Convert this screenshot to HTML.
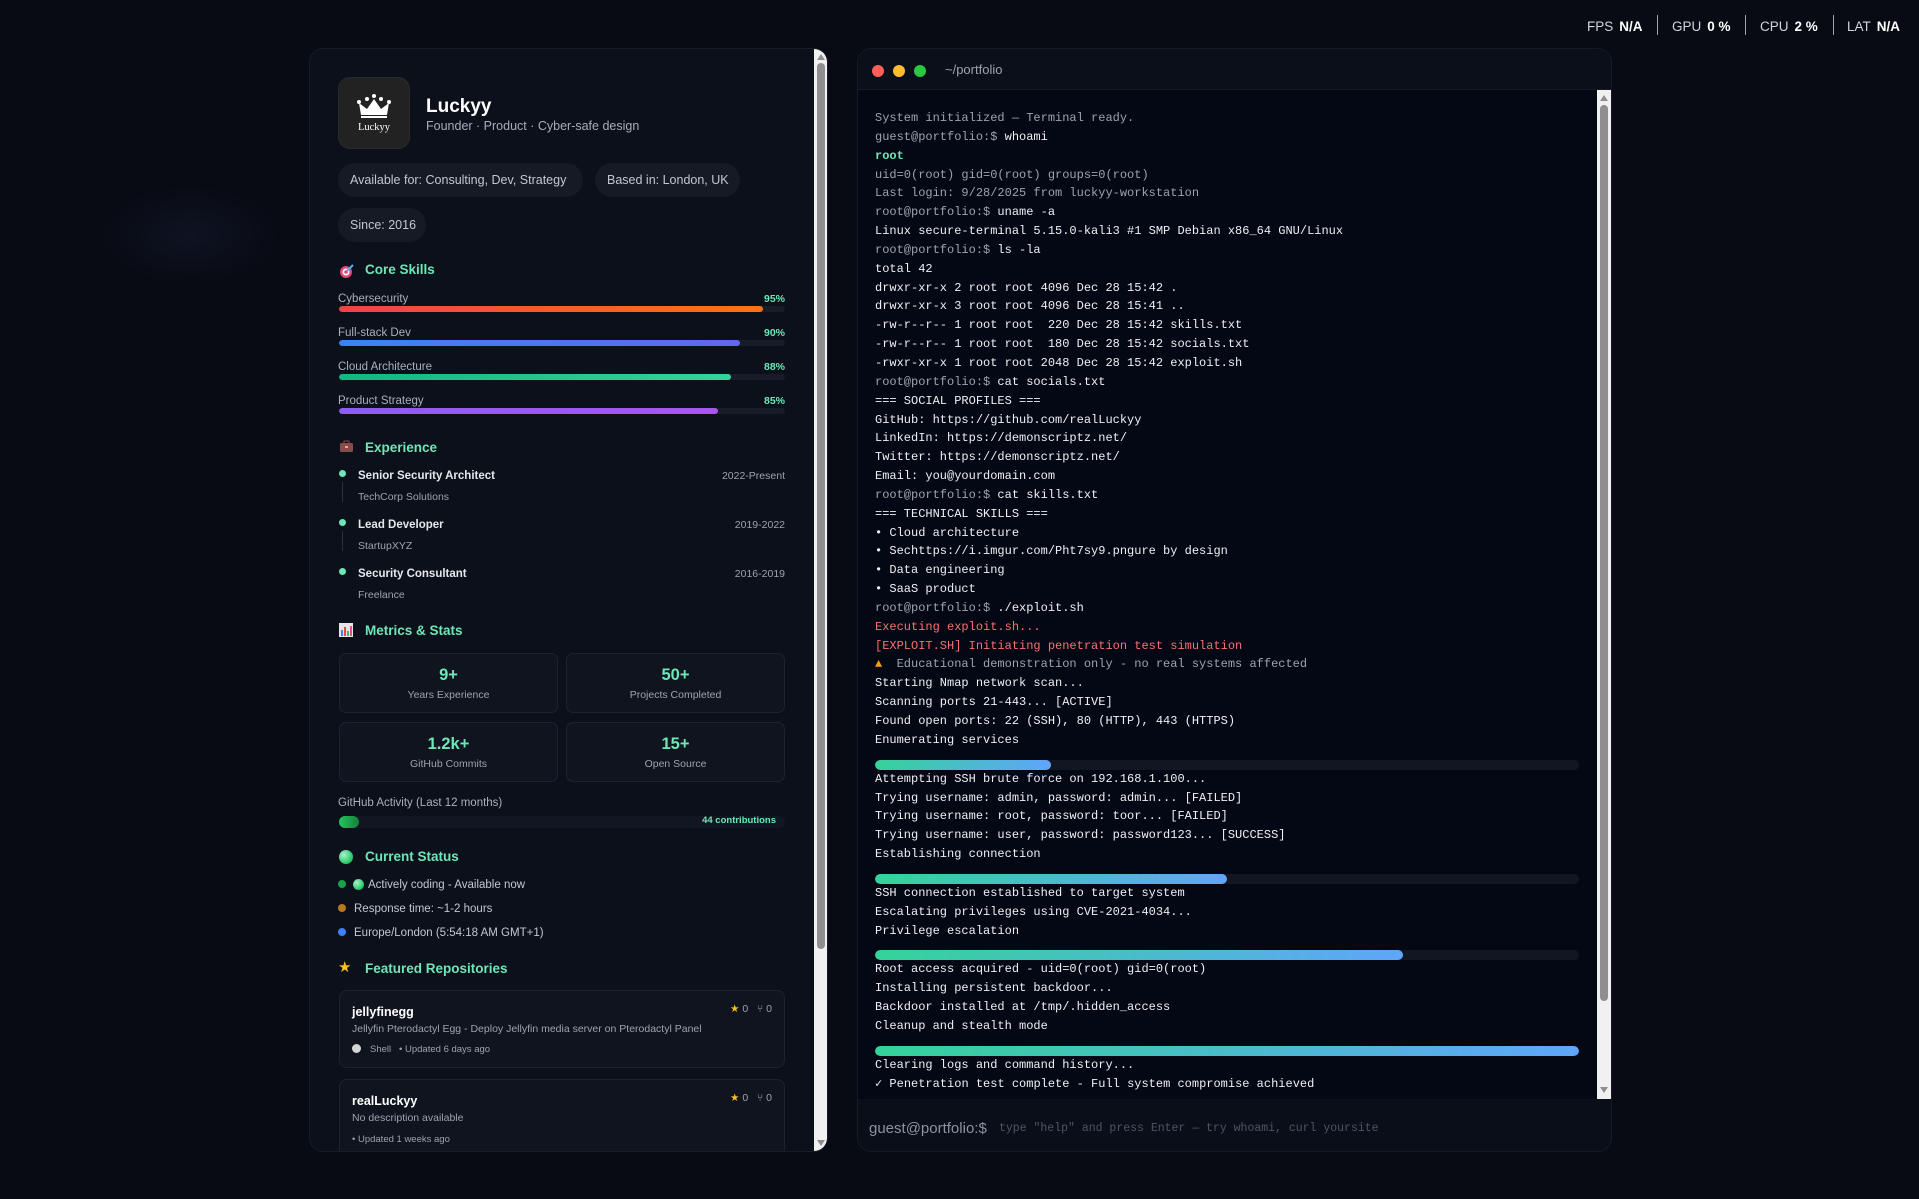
<!DOCTYPE html>
<html><head><meta charset="utf-8">
<style>
*{box-sizing:border-box;margin:0;padding:0}
html,body{width:1919px;height:1199px;overflow:hidden}
body{background:#080b14;font-family:"Liberation Sans",sans-serif;position:relative;color:#e5e7eb}
.glow{position:absolute;left:100px;top:185px;width:180px;height:100px;border-radius:50%;background:radial-gradient(ellipse,#0f1322 0%,rgba(8,11,20,0) 70%)}
.hud{position:absolute;top:19px;left:1587px;font-size:13.5px;color:#d1d5db;white-space:nowrap}
.hud span{display:inline-block;position:absolute;top:0}
.hud b{color:#fff;margin-left:6px}
.hud i{position:absolute;top:-4px;width:1px;height:20px;background:#9ca3af}
.a{position:absolute;white-space:nowrap}
#lp{position:absolute;left:309px;top:48px;width:519px;height:1104px;background:#0c101a;border:1px solid #171c28;border-radius:14px;overflow:hidden}
.chip{position:absolute;height:34px;border-radius:17px;background:#151a24;color:#c0c8d2;font-size:12.5px;line-height:34px;padding-left:12px}
.h{position:absolute;left:55px;font-size:13.5px;font-weight:bold;color:#6ee7b7;line-height:16px}
.sl{position:absolute;left:28px;font-size:11.5px;color:#a8b0bc;line-height:14px}
.sp{position:absolute;right:42px;font-size:10.5px;font-weight:bold;color:#6ee7b7;line-height:14px}
.bar{position:absolute;left:29px;width:446px;height:6px;border-radius:3px;background:#171c28;overflow:hidden}
.bar div{height:100%;border-radius:3px}
.dot{position:absolute;width:7px;height:7px;border-radius:50%}
.et{position:absolute;left:48px;font-size:11.5px;font-weight:bold;color:#e5e7eb;line-height:14px}
.ec{position:absolute;left:48px;font-size:10.5px;color:#9ca3af;line-height:14px}
.ed{position:absolute;right:42px;font-size:10.5px;color:#9ca3af;line-height:14px}
.card{position:absolute;width:219px;height:60px;border:1px solid #1c2230;border-radius:7px;background:#10141e;text-align:center}
.card .n{position:absolute;top:12px;width:100%;font-size:16.5px;font-weight:bold;color:#6ee7b7}
.card .l{position:absolute;top:35px;width:100%;font-size:10.5px;color:#9ca3af}
.st{position:absolute;font-size:11.5px;color:#c0c8d2;line-height:14px}
.repo{position:absolute;left:29px;width:446px;border:1px solid #1c2230;border-radius:8px;background:#10141e}
.rn{position:absolute;left:12px;font-size:12.5px;font-weight:bold;color:#fff}
.rd{position:absolute;left:12px;font-size:10.5px;color:#9ca3af}
.rm{position:absolute;left:12px;font-size:9.5px;color:#9ca3af}
.rs{position:absolute;right:12px;font-size:10.5px;color:#9ca3af}
.sb{position:absolute;background:#f1f1f1}
.sb .th{position:absolute;left:3px;width:8px;border-radius:4px;background:#8f8f8f}
.sb .up,.sb .dn{position:absolute;left:3px;width:0;height:0;border-left:4px solid transparent;border-right:4px solid transparent}
.sb .up{border-bottom:6px solid #8f8f8f}
.sb .dn{border-top:6px solid #8f8f8f}
#tp{position:absolute;left:857px;top:48px;width:755px;height:1104px;border:1px solid #151a26;border-radius:14px;overflow:hidden;background:#0a0e19}
#th{position:absolute;left:0;top:0;width:100%;height:41px;background:#0b0f1a;border-bottom:1px solid #161b27}
#tb{position:absolute;left:0;top:41px;width:739px;height:1009px;background:#040814;padding:19px 0 0 17px;font-family:"Liberation Mono",monospace;font-size:12px;line-height:18.84px;color:#e5e7eb;white-space:pre}
.g{color:#9ca3af}.w{color:#eef0f3}.gr{color:#6ee7b7;font-weight:bold}.r{color:#f87171}.m{color:#9ca3af}
.pb{margin-top:10px;width:704px;height:10px;border-radius:5px;background:#111622;overflow:hidden}
.pb div{height:100%;border-radius:5px;background:linear-gradient(90deg,#34d399,#60a5fa)}
</style></head><body>
<div class="glow"></div>
<div class="hud">
<span style="left:0">FPS<b>N/A</b></span><i style="left:70px"></i>
<span style="left:85px">GPU<b>0 %</b></span><i style="left:158px"></i>
<span style="left:173px">CPU<b>2 %</b></span><i style="left:246px"></i>
<span style="left:260px">LAT<b>N/A</b></span>
</div>

<div id="lp">
 <div class="a" style="left:28px;top:28px;width:72px;height:72px;border-radius:12px;background:#222;border:1px solid #2a2a2a">
  <svg width="72" height="72" viewBox="0 0 72 72" style="position:absolute;left:-1px;top:-1px">
   <path d="M23 38 L21 26 L29 32 L36 22 L43 32 L51 26 L49 38 Z" fill="#fff"/>
   <circle cx="21" cy="25" r="2" fill="#fff"/><circle cx="29" cy="22" r="2" fill="#fff"/><circle cx="36" cy="19" r="2" fill="#fff"/><circle cx="43" cy="22" r="2" fill="#fff"/><circle cx="51" cy="25" r="2" fill="#fff"/>
   <rect x="23" y="39" width="26" height="2" fill="#fff"/>
   <text x="36" y="53" text-anchor="middle" font-family="Liberation Serif,serif" font-size="10.5" fill="#fff">Luckyy</text>
  </svg>
 </div>
 <div class="a" style="left:116px;top:47px;font-size:19px;font-weight:bold;color:#fff">Luckyy</div>
 <div class="a" style="left:116px;top:70px;font-size:12.5px;color:#a5adba">Founder · Product · Cyber-safe design</div>
 <div class="chip" style="left:28px;top:114px;width:245px">Available for: Consulting, Dev, Strategy</div>
 <div class="chip" style="left:285px;top:114px;width:145px">Based in: London, UK</div>
 <div class="chip" style="left:28px;top:159px;width:88px">Since: 2016</div>

 <svg class="a" style="left:29px;top:214px" width="16" height="16"><circle cx="7" cy="9" r="6" fill="#e0487a"/><circle cx="7" cy="9" r="3.5" fill="#fff"/><circle cx="7" cy="9" r="1.8" fill="#e0487a"/><path d="M8 8 L14 2" stroke="#60a5fa" stroke-width="2"/></svg>
 <div class="h" style="top:213px">Core Skills</div>
 <div class="sl" style="top:243px">Cybersecurity</div><div class="sp" style="top:243px">95%</div>
 <div class="bar" style="top:257px"><div style="width:95%;background:linear-gradient(90deg,#ef4444,#f97316)"></div></div>
 <div class="sl" style="top:277px">Full-stack Dev</div><div class="sp" style="top:277px">90%</div>
 <div class="bar" style="top:291px"><div style="width:90%;background:linear-gradient(90deg,#3b82f6,#6366f1)"></div></div>
 <div class="sl" style="top:311px">Cloud Architecture</div><div class="sp" style="top:311px">88%</div>
 <div class="bar" style="top:325px"><div style="width:88%;background:linear-gradient(90deg,#10b981,#34d399)"></div></div>
 <div class="sl" style="top:345px">Product Strategy</div><div class="sp" style="top:345px">85%</div>
 <div class="bar" style="top:359px"><div style="width:85%;background:linear-gradient(90deg,#8b5cf6,#a855f7)"></div></div>

 <svg class="a" style="left:29px;top:391px" width="16" height="14"><rect x="1" y="3" width="13" height="9" rx="1.5" fill="#8b4a4a"/><rect x="5" y="1" width="5" height="3" fill="none" stroke="#8b4a4a"/><rect x="6" y="6" width="3" height="2" fill="#e0b070"/></svg>
 <div class="h" style="top:391px">Experience</div>
 <div class="dot" style="left:29px;top:421px;background:#6ee7b7"></div>
 <div class="a" style="left:32px;top:433px;width:1px;height:20px;background:#2a3040"></div>
 <div class="et" style="top:420px">Senior Security Architect</div><div class="ed" style="top:420px">2022-Present</div>
 <div class="ec" style="top:441px">TechCorp Solutions</div>
 <div class="dot" style="left:29px;top:470px;background:#6ee7b7"></div>
 <div class="a" style="left:32px;top:482px;width:1px;height:20px;background:#2a3040"></div>
 <div class="et" style="top:469px">Lead Developer</div><div class="ed" style="top:469px">2019-2022</div>
 <div class="ec" style="top:490px">StartupXYZ</div>
 <div class="dot" style="left:29px;top:519px;background:#6ee7b7"></div>
 <div class="et" style="top:518px">Security Consultant</div><div class="ed" style="top:518px">2016-2019</div>
 <div class="ec" style="top:539px">Freelance</div>

 <svg class="a" style="left:29px;top:574px" width="14" height="14"><rect x="0" y="0" width="14" height="14" fill="#e6e6e6"/><rect x="2" y="7" width="2" height="6" fill="#3b82f6"/><rect x="5" y="4" width="2" height="9" fill="#ef4444"/><rect x="8" y="8" width="2" height="5" fill="#22c55e"/><rect x="11" y="3" width="2" height="10" fill="#ec4899"/></svg>
 <div class="h" style="top:574px">Metrics &amp; Stats</div>
 <div class="card" style="left:29px;top:604px"><div class="n">9+</div><div class="l">Years Experience</div></div>
 <div class="card" style="left:256px;top:604px"><div class="n">50+</div><div class="l">Projects Completed</div></div>
 <div class="card" style="left:29px;top:673px"><div class="n">1.2k+</div><div class="l">GitHub Commits</div></div>
 <div class="card" style="left:256px;top:673px"><div class="n">15+</div><div class="l">Open Source</div></div>
 <div class="sl" style="top:747px;font-size:11.5px">GitHub Activity (Last 12 months)</div>
 <div class="a" style="left:29px;top:767px;width:446px;height:12px;border-radius:6px;background:#111622"></div>
 <div class="a" style="left:29px;top:767px;width:20px;height:12px;border-radius:6px;background:linear-gradient(90deg,#22c55e,#15803d)"></div>
 <div class="a" style="right:51px;top:766px;font-size:9.5px;font-weight:bold;color:#6ee7b7">44 contributions</div>

 <div class="a" style="left:29px;top:801px;width:14px;height:14px;border-radius:50%;background:radial-gradient(circle at 35% 35%,#a7f3d0,#22c55e 70%)"></div>
 <div class="h" style="top:800px">Current Status</div>
 <div class="dot" style="left:28px;top:831px;width:8px;height:8px;background:#16a34a"></div>
 <div class="a" style="left:43px;top:830px;width:11px;height:11px;border-radius:50%;background:radial-gradient(circle at 35% 35%,#a7f3d0,#22c55e 70%)"></div>
 <div class="st" style="left:58px;top:829px">Actively coding - Available now</div>
 <div class="dot" style="left:28px;top:855px;width:8px;height:8px;background:#b7791f"></div>
 <div class="st" style="left:44px;top:853px">Response time: ~1-2 hours</div>
 <div class="dot" style="left:28px;top:879px;width:8px;height:8px;background:#3b82f6"></div>
 <div class="st" style="left:44px;top:877px">Europe/London (5:54:18 AM GMT+1)</div>

 <div class="a" style="left:28px;top:911px;font-size:15px;color:#fbbf24;line-height:16px">★</div>
 <div class="h" style="top:912px">Featured Repositories</div>
 <div class="repo" style="top:941px;height:78px">
  <div class="rn" style="top:14px">jellyfinegg</div>
  <div class="rs" style="top:12px"><span style="color:#fbbf24">★</span> 0 &nbsp; <span style="color:#9ca3af">⑂</span> 0</div>
  <div class="rd" style="top:32px">Jellyfin Pterodactyl Egg - Deploy Jellyfin media server on Pterodactyl Panel</div>
  <div class="a" style="left:12px;top:53px;width:9px;height:9px;border-radius:50%;background:#d4d4d4"></div>
  <div class="rm" style="top:53px;left:30px">Shell &nbsp; • Updated 6 days ago</div>
 </div>
 <div class="repo" style="top:1030px;height:90px">
  <div class="rn" style="top:14px">realLuckyy</div>
  <div class="rs" style="top:12px"><span style="color:#fbbf24">★</span> 0 &nbsp; <span style="color:#9ca3af">⑂</span> 0</div>
  <div class="rd" style="top:32px">No description available</div>
  <div class="rm" style="top:54px">• Updated 1 weeks ago</div>
 </div>

 <div class="sb" style="left:504px;top:0;width:14px;height:1104px">
  <div class="up" style="top:5px"></div>
  <div class="th" style="top:14px;height:886px"></div>
  <div class="dn" style="top:1091px"></div>
 </div>
</div>

<div id="tp">
 <div id="th">
  <div class="a" style="left:14px;top:16px;width:12px;height:12px;border-radius:50%;background:#ff5f57"></div>
  <div class="a" style="left:35px;top:16px;width:12px;height:12px;border-radius:50%;background:#febc2e"></div>
  <div class="a" style="left:56px;top:16px;width:12px;height:12px;border-radius:50%;background:#28c840"></div>
  <div class="a" style="left:87px;top:13px;font-size:13px;color:#9ca3af">~/portfolio</div>
 </div>
 <div id="tb"><span class="g">System initialized — Terminal ready.</span>
<span class="g">guest@portfolio:$ </span><span class="w">whoami</span>
<span class="gr">root</span>
<span class="g">uid=0(root) gid=0(root) groups=0(root)</span>
<span class="g">Last login: 9/28/2025 from luckyy-workstation</span>
<span class="g">root@portfolio:$ </span><span class="w">uname -a</span>
<span class="w">Linux secure-terminal 5.15.0-kali3 #1 SMP Debian x86_64 GNU/Linux</span>
<span class="g">root@portfolio:$ </span><span class="w">ls -la</span>
<span class="w">total 42</span>
<span class="w">drwxr-xr-x 2 root root 4096 Dec 28 15:42 .</span>
<span class="w">drwxr-xr-x 3 root root 4096 Dec 28 15:41 ..</span>
<span class="w">-rw-r--r-- 1 root root  220 Dec 28 15:42 skills.txt</span>
<span class="w">-rw-r--r-- 1 root root  180 Dec 28 15:42 socials.txt</span>
<span class="w">-rwxr-xr-x 1 root root 2048 Dec 28 15:42 exploit.sh</span>
<span class="g">root@portfolio:$ </span><span class="w">cat socials.txt</span>
<span class="w">=== SOCIAL PROFILES ===</span>
<span class="w">GitHub: https://github.com/realLuckyy</span>
<span class="w">LinkedIn: https://demonscriptz.net/</span>
<span class="w">Twitter: https://demonscriptz.net/</span>
<span class="w">Email: you@yourdomain.com</span>
<span class="g">root@portfolio:$ </span><span class="w">cat skills.txt</span>
<span class="w">=== TECHNICAL SKILLS ===</span>
<span class="w">• Cloud architecture</span>
<span class="w">• Sechttps://i.imgur.com/Pht7sy9.pngure by design</span>
<span class="w">• Data engineering</span>
<span class="w">• SaaS product</span>
<span class="g">root@portfolio:$ </span><span class="w">./exploit.sh</span>
<span class="r">Executing exploit.sh...</span>
<span class="r">[EXPLOIT.SH] Initiating penetration test simulation</span>
<span class="m"><span style="color:#f59e0b">▲</span>  Educational demonstration only - no real systems affected</span>
<span class="w">Starting Nmap network scan...</span>
<span class="w">Scanning ports 21-443... [ACTIVE]</span>
<span class="w">Found open ports: 22 (SSH), 80 (HTTP), 443 (HTTPS)</span>
<span class="w">Enumerating services</span>
<div class="pb"><div style="width:25%"></div></div><span class="w">Attempting SSH brute force on 192.168.1.100...</span>
<span class="w">Trying username: admin, password: admin... [FAILED]</span>
<span class="w">Trying username: root, password: toor... [FAILED]</span>
<span class="w">Trying username: user, password: password123... [SUCCESS]</span>
<span class="w">Establishing connection</span>
<div class="pb"><div style="width:50%"></div></div><span class="w">SSH connection established to target system</span>
<span class="w">Escalating privileges using CVE-2021-4034...</span>
<span class="w">Privilege escalation</span>
<div class="pb"><div style="width:75%"></div></div><span class="w">Root access acquired - uid=0(root) gid=0(root)</span>
<span class="w">Installing persistent backdoor...</span>
<span class="w">Backdoor installed at /tmp/.hidden_access</span>
<span class="w">Cleanup and stealth mode</span>
<div class="pb"><div style="width:100%"></div></div><span class="w">Clearing logs and command history...</span>
<span class="w">✓ Penetration test complete - Full system compromise achieved</span></div>
 <div class="sb" style="left:739px;top:41px;width:14px;height:1009px">
  <div class="up" style="top:5px"></div>
  <div class="th" style="top:15px;height:896px"></div>
  <div class="dn" style="top:997px"></div>
 </div>
 <div class="a" style="left:11px;top:1071px;font-size:15px;color:#8b93a1">guest@portfolio:$</div>
 <div class="a" style="left:141px;top:1073px;font-family:'Liberation Mono',monospace;font-size:11.5px;color:#4b5563">type "help" and press Enter — try whoami, curl yoursite</div>
</div>
</body></html>
